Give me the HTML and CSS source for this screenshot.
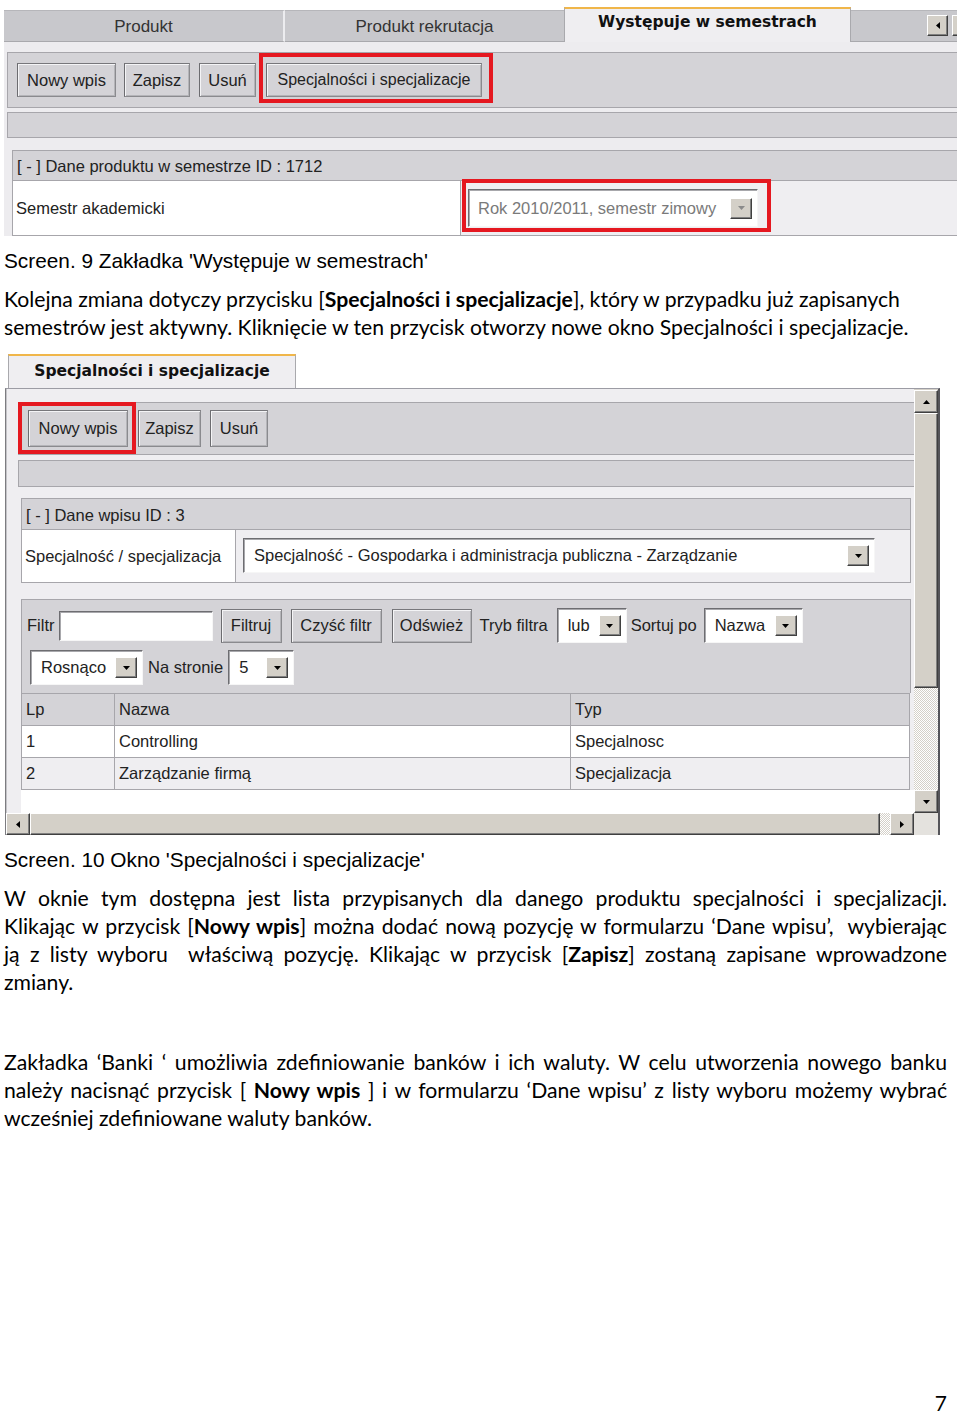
FILE: index.html
```html
<!DOCTYPE html>
<html lang="pl">
<head>
    <meta charset="UTF-8">
    <meta name="viewport" content="width=device-width, initial-scale=1.0">
    <title>Występuje w semestrach</title>
    <link rel="stylesheet" href="styles.css">
</head>
<body>
<div class="page">

    <!-- Screen 9: tab "Występuje w semestrach" -->
    <div class="shot-sem">
        <div class="tabbar">
            <div class="tab tab-first">Produkt</div>
            <div class="tab tab-second">Produkt rekrutacja</div>
            <div class="tab tab-active">Występuje w semestrach</div>
            <div class="tab tab-fill"></div>
            <div class="tab tab-scroll">
                <span class="sbtn sbtn-tab"><svg width="4" height="7" viewBox="0 0 4 7"><path d="M4 0v7L0 3.5z"/></svg></span>
                <span class="sbtn sbtn-tab sbtn-cut"></span>
            </div>
        </div>
        <div class="tab-body">
            <div class="toolbar">
                <span class="btn btn-new">Nowy wpis</span>
                <span class="btn btn-save">Zapisz</span>
                <span class="btn btn-del">Usuń</span>
                <span class="mark mark-spec"><span class="btn btn-spec">Specjalności i specjalizacje</span></span>
            </div>
            <div class="bar"></div>
            <div class="form-panel">
                <div class="panel-head">[ - ] Dane produktu w semestrze ID : 1712</div>
                <div class="form-row">
                    <div class="form-label">Semestr akademicki</div>
                    <div class="form-field">
                        <span class="mark mark-sem">
                            <span class="select select-sem disabled">
                                <span class="select-text">Rok 2010/2011, semestr zimowy</span>
                                <span class="drop"><svg width="7" height="4" viewBox="0 0 7 4"><path d="M0 0h7L3.5 4z"/></svg></span>
                            </span>
                        </span>
                    </div>
                </div>
            </div>
        </div>
    </div>

    <p class="caption">Screen. 9 Zakładka 'Występuje w semestrach'</p>

    <p class="doc-text">Kolejna zmiana dotyczy przycisku [<b>Specjalności i specjalizacje</b>], który w przypadku już zapisanych<br>semestrów jest aktywny. Kliknięcie w ten przycisk otworzy nowe okno Specjalności i specjalizacje.</p>

    <!-- Screen 10: window "Specjalności i specjalizacje" -->
    <div class="shot-spec">
        <div class="win-tab">Specjalności i specjalizacje</div>
        <div class="win">
            <div class="win-main">
                <div class="toolbar toolbar-win">
                    <span class="mark mark-new"><span class="btn btn-new">Nowy wpis</span></span>
                    <span class="btn btn-save">Zapisz</span>
                    <span class="btn btn-del">Usuń</span>
                </div>
                <div class="bar bar-win"></div>
                <div class="form-panel entry-panel">
                    <div class="panel-head">[ - ] Dane wpisu ID : 3</div>
                    <div class="form-row entry-row">
                        <div class="form-label entry-label">Specjalność / specjalizacja</div>
                        <div class="form-field entry-field">
                            <span class="select select-entry">
                                <span class="select-text">Specjalność - Gospodarka i administracja publiczna - Zarządzanie</span>
                                <span class="drop"><svg width="7" height="4" viewBox="0 0 7 4"><path d="M0 0h7L3.5 4z"/></svg></span>
                            </span>
                        </div>
                    </div>
                </div>

                <div class="filter-panel">
                    <div class="filter-row">
                        <span class="flabel">Filtr</span>
                        <span class="input"></span>
                        <span class="btn btn-small btn-filter">Filtruj</span>
                        <span class="btn btn-small btn-clear">Czyść filtr</span>
                        <span class="btn btn-small btn-refresh">Odśwież</span>
                        <span class="flabel flabel-mode">Tryb filtra</span>
                        <span class="select select-small select-lub">
                            <span class="select-text">lub</span>
                            <span class="drop"><svg width="7" height="4" viewBox="0 0 7 4"><path d="M0 0h7L3.5 4z"/></svg></span>
                        </span>
                        <span class="flabel flabel-sort">Sortuj po</span>
                        <span class="select select-small select-nazwa">
                            <span class="select-text">Nazwa</span>
                            <span class="drop"><svg width="7" height="4" viewBox="0 0 7 4"><path d="M0 0h7L3.5 4z"/></svg></span>
                        </span>
                    </div>
                    <div class="filter-row filter-row-2">
                        <span class="select select-small select-order">
                            <span class="select-text">Rosnąco</span>
                            <span class="drop"><svg width="7" height="4" viewBox="0 0 7 4"><path d="M0 0h7L3.5 4z"/></svg></span>
                        </span>
                        <span class="flabel">Na stronie</span>
                        <span class="select select-small select-page">
                            <span class="select-text">5</span>
                            <span class="drop"><svg width="7" height="4" viewBox="0 0 7 4"><path d="M0 0h7L3.5 4z"/></svg></span>
                        </span>
                    </div>
                </div>

                <table class="grid">
                    <tr class="grid-head">
                        <td class="col-lp">Lp</td>
                        <td class="col-name">Nazwa</td>
                        <td>Typ</td>
                    </tr>
                    <tr>
                        <td>1</td>
                        <td>Controlling</td>
                        <td>Specjalnosc</td>
                    </tr>
                    <tr class="grid-alt">
                        <td>2</td>
                        <td>Zarządzanie firmą</td>
                        <td>Specjalizacja</td>
                    </tr>
                </table>
                <div class="grid-empty"></div>
            </div>

            <div class="vscroll">
                <span class="sbtn sbtn-v"><svg width="7" height="4" viewBox="0 0 7 4"><path d="M0 4h7L3.5 0z"/></svg></span>
                <span class="thumb thumb-v"></span>
                <span class="track"></span>
                <span class="sbtn sbtn-v"><svg width="7" height="4" viewBox="0 0 7 4"><path d="M0 0h7L3.5 4z"/></svg></span>
            </div>
            <div class="hscroll">
                <span class="sbtn sbtn-h"><svg width="4" height="7" viewBox="0 0 4 7"><path d="M4 0v7L0 3.5z"/></svg></span>
                <span class="thumb thumb-h"></span>
                <span class="track track-h"></span>
                <span class="sbtn sbtn-h"><svg width="4" height="7" viewBox="0 0 4 7"><path d="M0 0v7L4 3.5z"/></svg></span>
            </div>
            <div class="corner"></div>
        </div>
    </div>

    <p class="caption">Screen. 10 Okno 'Specjalności i specjalizacje'</p>

    <p class="doc-text justified">
        <span class="line">W oknie tym dostępna jest lista przypisanych dla danego produktu specjalności i specjalizacji.</span>
        <span class="line">Klikając w przycisk [<b>Nowy wpis</b>] można dodać nową pozycję w formularzu ‘Dane wpisu’,&nbsp; wybierając</span>
        <span class="line">ją z listy wyboru&nbsp; właściwą pozycję. Klikając w przycisk [<b>Zapisz</b>] zostaną zapisane wprowadzone</span>
        <span class="line last">zmiany.</span>
    </p>

    <p class="doc-text justified para-banks">
        <span class="line">Zakładka ‘Banki ‘ umożliwia zdefiniowanie banków i ich waluty. W celu utworzenia nowego banku</span>
        <span class="line">należy nacisnąć przycisk [ <b>Nowy wpis</b> ] i w formularzu ‘Dane wpisu’ z listy wyboru możemy wybrać</span>
        <span class="line last">wcześniej zdefiniowane waluty banków.</span>
    </p>

    <p class="page-num">7</p>
</div>
</body>
</html>
```

FILE: styles.css
```css
/* Page: a PDF page with two application screenshots */
body {
    margin: 0;
    background-color: #fff;
    font-family: "Liberation Sans", Arial, sans-serif;
    color: #000;
}

.page {
    width: 960px;
    height: 1415px;
    padding: 7px 0 0 4px;
    box-sizing: border-box;
    overflow: hidden;
}

/* ---------- common widgets ---------- */

.btn {
    display: inline-flex;
    align-items: center;
    justify-content: center;
    box-sizing: border-box;
    height: 34px;
    margin-right: 8px;
    font-size: 16.5px;
    color: #222;
    background-color: #d4d3d7;
    border: 1px solid #8a8a8e;
    border-left-color: #6c6c70;
    border-top-color: #77777b;
    box-shadow: inset 1px 1px 0 #f4f4f6, inset -1px -1px 0 #b4b4b8;
    white-space: nowrap;
}

.btn-new {
    width: 99px;
}

.btn-save {
    width: 66px;
    margin-right: 9px;
}

.btn-del {
    width: 57px;
}

.btn-spec {
    width: 216px;
    font-size: 16px;
}

.mark {
    position: relative;
    display: inline-flex;
}

.mark::after {
    content: "";
    position: absolute;
    border: 4px solid #e51820;
}

.mark-spec {
    margin-left: 2px;
}

.mark-spec::after {
    top: -10px;
    left: -7px;
    right: -11px;
    bottom: -6px;
}

.mark-spec .btn {
    margin-right: 0;
}

.select {
    display: inline-flex;
    align-items: center;
    justify-content: space-between;
    box-sizing: border-box;
    background-color: #fff;
    border: 1px solid;
    border-color: #6d6d71 #f6f6f6 #f6f6f6 #6d6d71;
    box-shadow: inset 1px 1px 0 #a8a8ac;
    font-size: 16.5px;
    color: #222;
    white-space: nowrap;
}

.select-text {
    padding-left: 9px;
}

.drop {
    display: inline-flex;
    align-items: center;
    justify-content: center;
    box-sizing: border-box;
    width: 22px;
    height: 21px;
    margin-right: 5px;
    background-color: #d4d0c8;
    border: 1px solid;
    border-color: #fff #404040 #404040 #fff;
    box-shadow: inset -1px -1px 0 #808080;
}

.drop svg {
    fill: #000;
}

.disabled {
    color: #7a7a7a;
}

.disabled .drop svg {
    fill: #8a8a8a;
}

.sbtn {
    display: flex;
    align-items: center;
    justify-content: center;
    box-sizing: border-box;
    background-color: #d4d0c8;
    border: 1px solid;
    border-color: #fff #404040 #404040 #fff;
    box-shadow: inset -1px -1px 0 #808080;
}

.sbtn svg {
    fill: #000;
}

/* ---------- screen 9 ---------- */

.shot-sem {
    width: 953px;
}

.tabbar {
    display: flex;
    align-items: flex-end;
    height: 35px;
}

.tab {
    box-sizing: border-box;
    height: 32px;
    line-height: 31px;
    text-align: center;
    font-size: 17px;
    color: #333;
    background-color: #c8c8cc;
    border-top: 1px solid #b6b6ba;
    border-bottom: 1px solid #a9a9ad;
}

.tab-first {
    width: 281px;
    border-right: 2px solid #ececef;
}

.tab-second {
    width: 279px;
}

.tab-active {
    width: 287px;
    height: 35px;
    line-height: 26px;
    font-family: "DejaVu Sans", Verdana, sans-serif;
    font-weight: bold;
    font-size: 15.5px;
    color: #111;
    background-color: #efeef1;
    border-top: 2px solid #f0b64a;
    border-left: 1px solid #a9a9ad;
    border-right: 1px solid #a9a9ad;
    border-bottom: none;
}

.tab-fill {
    flex: 1;
}

.tab-scroll {
    display: flex;
    gap: 4px;
    width: 32px;
    padding: 4px 0 0 2px;
    overflow: hidden;
}

.sbtn-tab {
    flex: none;
    width: 21px;
    height: 21px;
}

.sbtn-cut {
    width: 10px;
}

.tab-body {
    background-color: #edecef;
    padding-top: 10px;
}

.toolbar {
    display: flex;
    align-items: flex-start;
    box-sizing: border-box;
    height: 56px;
    margin-left: 3px;
    padding: 10px 0 0 9px;
    background-color: #d4d3d7;
    border: 1px solid #a7a6ab;
    border-right: none;
}

.bar {
    height: 24px;
    margin: 4px 0 0 3px;
    background-color: #d4d3d7;
    border: 1px solid #a7a6ab;
    border-right: none;
}

.form-panel {
    margin: 12px 0 0 8px;
    border-left: 1px solid #a7a6ab;
}

.panel-head {
    box-sizing: border-box;
    height: 31px;
    line-height: 31px;
    padding-left: 4px;
    font-size: 16.5px;
    color: #222;
    background-color: #d4d3d7;
    border-top: 1px solid #a7a6ab;
    border-bottom: 1px solid #a7a6ab;
}

.form-row {
    display: flex;
    height: 54px;
    border-bottom: 1px solid #a7a6ab;
}

.form-label {
    display: flex;
    align-items: center;
    width: 448px;
    padding-left: 3px;
    box-sizing: border-box;
    font-size: 16.5px;
    color: #222;
    background-color: #fff;
    border-right: 1px solid #a7a6ab;
}

.form-field {
    flex: 1;
    padding: 8px 0 0 7px;
    background-color: #efeef1;
}

.mark-sem::after {
    top: -10px;
    left: -6px;
    right: -13px;
    bottom: -5px;
}

.select-sem {
    width: 290px;
    height: 38px;
}

/* ---------- captions and text ---------- */

.caption {
    margin: 13px 0 0;
    font-size: 20.8px;
    line-height: 24px;
}

.doc-text {
    width: 943px;
    margin: 12px 0 0;
    font-family: Lato, "Open Sans", sans-serif;
    font-size: 21.2px;
    line-height: 28px;
}

.justified .line {
    display: block;
    text-align: justify;
    text-align-last: justify;
}

.justified .line.last {
    text-align-last: left;
}

.para-banks {
    margin-top: 52px;
}

.page-num {
    width: 943px;
    margin: 260px 0 0;
    text-align: right;
    font-family: Lato, sans-serif;
    font-size: 21px;
    line-height: 22px;
}

/* ---------- screen 10 ---------- */

.shot-spec {
    width: 935px;
    margin: 13px 0 0 1px;
}

.win-tab {
    box-sizing: border-box;
    width: 288px;
    height: 34px;
    margin-left: 3px;
    line-height: 30px;
    text-align: center;
    font-family: "DejaVu Sans", Verdana, sans-serif;
    font-weight: bold;
    font-size: 15.5px;
    color: #111;
    background-color: #efeef1;
    border-top: 2px solid #f0b64a;
    border-left: 1px solid #a9a9ad;
    border-right: 1px solid #a9a9ad;
}

.win {
    display: grid;
    grid-template-columns: 1fr 24px;
    grid-template-rows: 424px 22px;
    border-top: 1px solid #9c9ca4;
    border-left: 1px solid #7c7c80;
    border-right: 2px solid #55555a;
}

.win-main {
    background-color: #efeef1;
    padding-top: 13px;
    border-left: 1px solid #c4c4c8;
}

.toolbar-win {
    height: 53px;
    margin-left: 11px;
    padding: 7px 0 0 9px;
}

.toolbar-win .btn {
    height: 37px;
}

.toolbar-win .btn-new {
    width: 100px;
}

.toolbar-win .btn-save {
    width: 63px;
}

.toolbar-win .btn-del {
    width: 58px;
}

.mark-new {
    margin-right: 10px;
}

.mark-new .btn {
    margin-right: 0;
}

.mark-new::after {
    top: -8px;
    left: -10px;
    right: -8px;
    bottom: -7px;
}

.bar-win {
    height: 25px;
    margin: 5px 0 0 11px;
}

.entry-panel {
    margin: 11px 3px 0 14px;
    border-right: 1px solid #a7a6ab;
}

.entry-panel .panel-head {
    height: 32px;
    line-height: 32px;
}

.entry-row {
    height: 52px;
    border-bottom: 1px solid #a7a6ab;
}

.entry-label {
    width: 214px;
}

.entry-field {
    padding: 8px 0 0 7px;
}

.select-entry {
    width: 632px;
    height: 35px;
}

.select-entry .select-text {
    padding-left: 10px;
}

.filter-panel {
    box-sizing: border-box;
    height: 94px;
    margin: 16px 3px 0 14px;
    padding: 8px 0 0 5px;
    background-color: #d4d3d7;
    border: 1px solid #a7a6ab;
    border-bottom: none;
}

.filter-row {
    display: flex;
    align-items: center;
    height: 35px;
}

.filter-row-2 {
    margin-top: 7px;
    padding-left: 3px;
}

.flabel {
    font-size: 16.5px;
    color: #222;
    margin-right: 4px;
}

.flabel-mode {
    margin-right: 9px;
}

.flabel-sort {
    margin-right: 7px;
}

.input {
    box-sizing: border-box;
    width: 154px;
    height: 30px;
    margin-right: 8px;
    background-color: #fff;
    border: 1px solid;
    border-color: #6d6d71 #f6f6f6 #f6f6f6 #6d6d71;
    box-shadow: inset 1px 1px 0 #a8a8ac;
}

.btn-small {
    height: 34px;
    margin-right: 9px;
}

.btn-filter {
    width: 61px;
}

.btn-clear {
    width: 91px;
    margin-right: 10px;
}

.btn-refresh {
    width: 80px;
    margin-right: 8px;
}

.select-small {
    height: 35px;
    margin-right: 4px;
}

.select-small .select-text {
    padding-left: 10px;
    padding-right: 8px;
}

.select-lub {
    width: 70px;
}

.select-nazwa {
    width: 99px;
}

.select-order {
    width: 113px;
}

.select-page {
    width: 66px;
}

.filter-row-2 .flabel {
    margin-left: 1px;
    margin-right: 5px;
}

.grid {
    width: 889px;
    margin-left: 14px;
    border-collapse: collapse;
    font-size: 16.5px;
    color: #222;
}

.grid td {
    height: 31px;
    padding: 0 0 0 4px;
    border: 1px solid #a7a6ab;
    background-color: #fff;
}

.grid-head td {
    background-color: #d4d3d7;
}

.grid-alt td {
    background-color: #efeef1;
}

.col-lp {
    width: 88px;
}

.col-name {
    width: 451px;
}

.grid-empty {
    height: 23px;
    margin: 0 0 0 14px;
    background-color: #fff;
}

.vscroll {
    display: flex;
    flex-direction: column;
    padding-top: 1px;
    background-color: #d4d0c8;
}

.sbtn-v {
    height: 23px;
}

.thumb {
    box-sizing: border-box;
    background-color: #d4d0c8;
    border: 1px solid;
    border-color: #fff #404040 #404040 #fff;
    box-shadow: inset -1px -1px 0 #808080;
}

.thumb-v {
    height: 275px;
}

.track {
    flex: 1;
    background: repeating-conic-gradient(#fff 0 25%, #d4d0c8 0 50%) 0 0 / 2px 2px;
}

.hscroll {
    display: flex;
    background-color: #d4d0c8;
}

.sbtn-h {
    width: 24px;
}

.thumb-h {
    width: 850px;
}

.corner {
    background-color: #e4e2de;
}
```
